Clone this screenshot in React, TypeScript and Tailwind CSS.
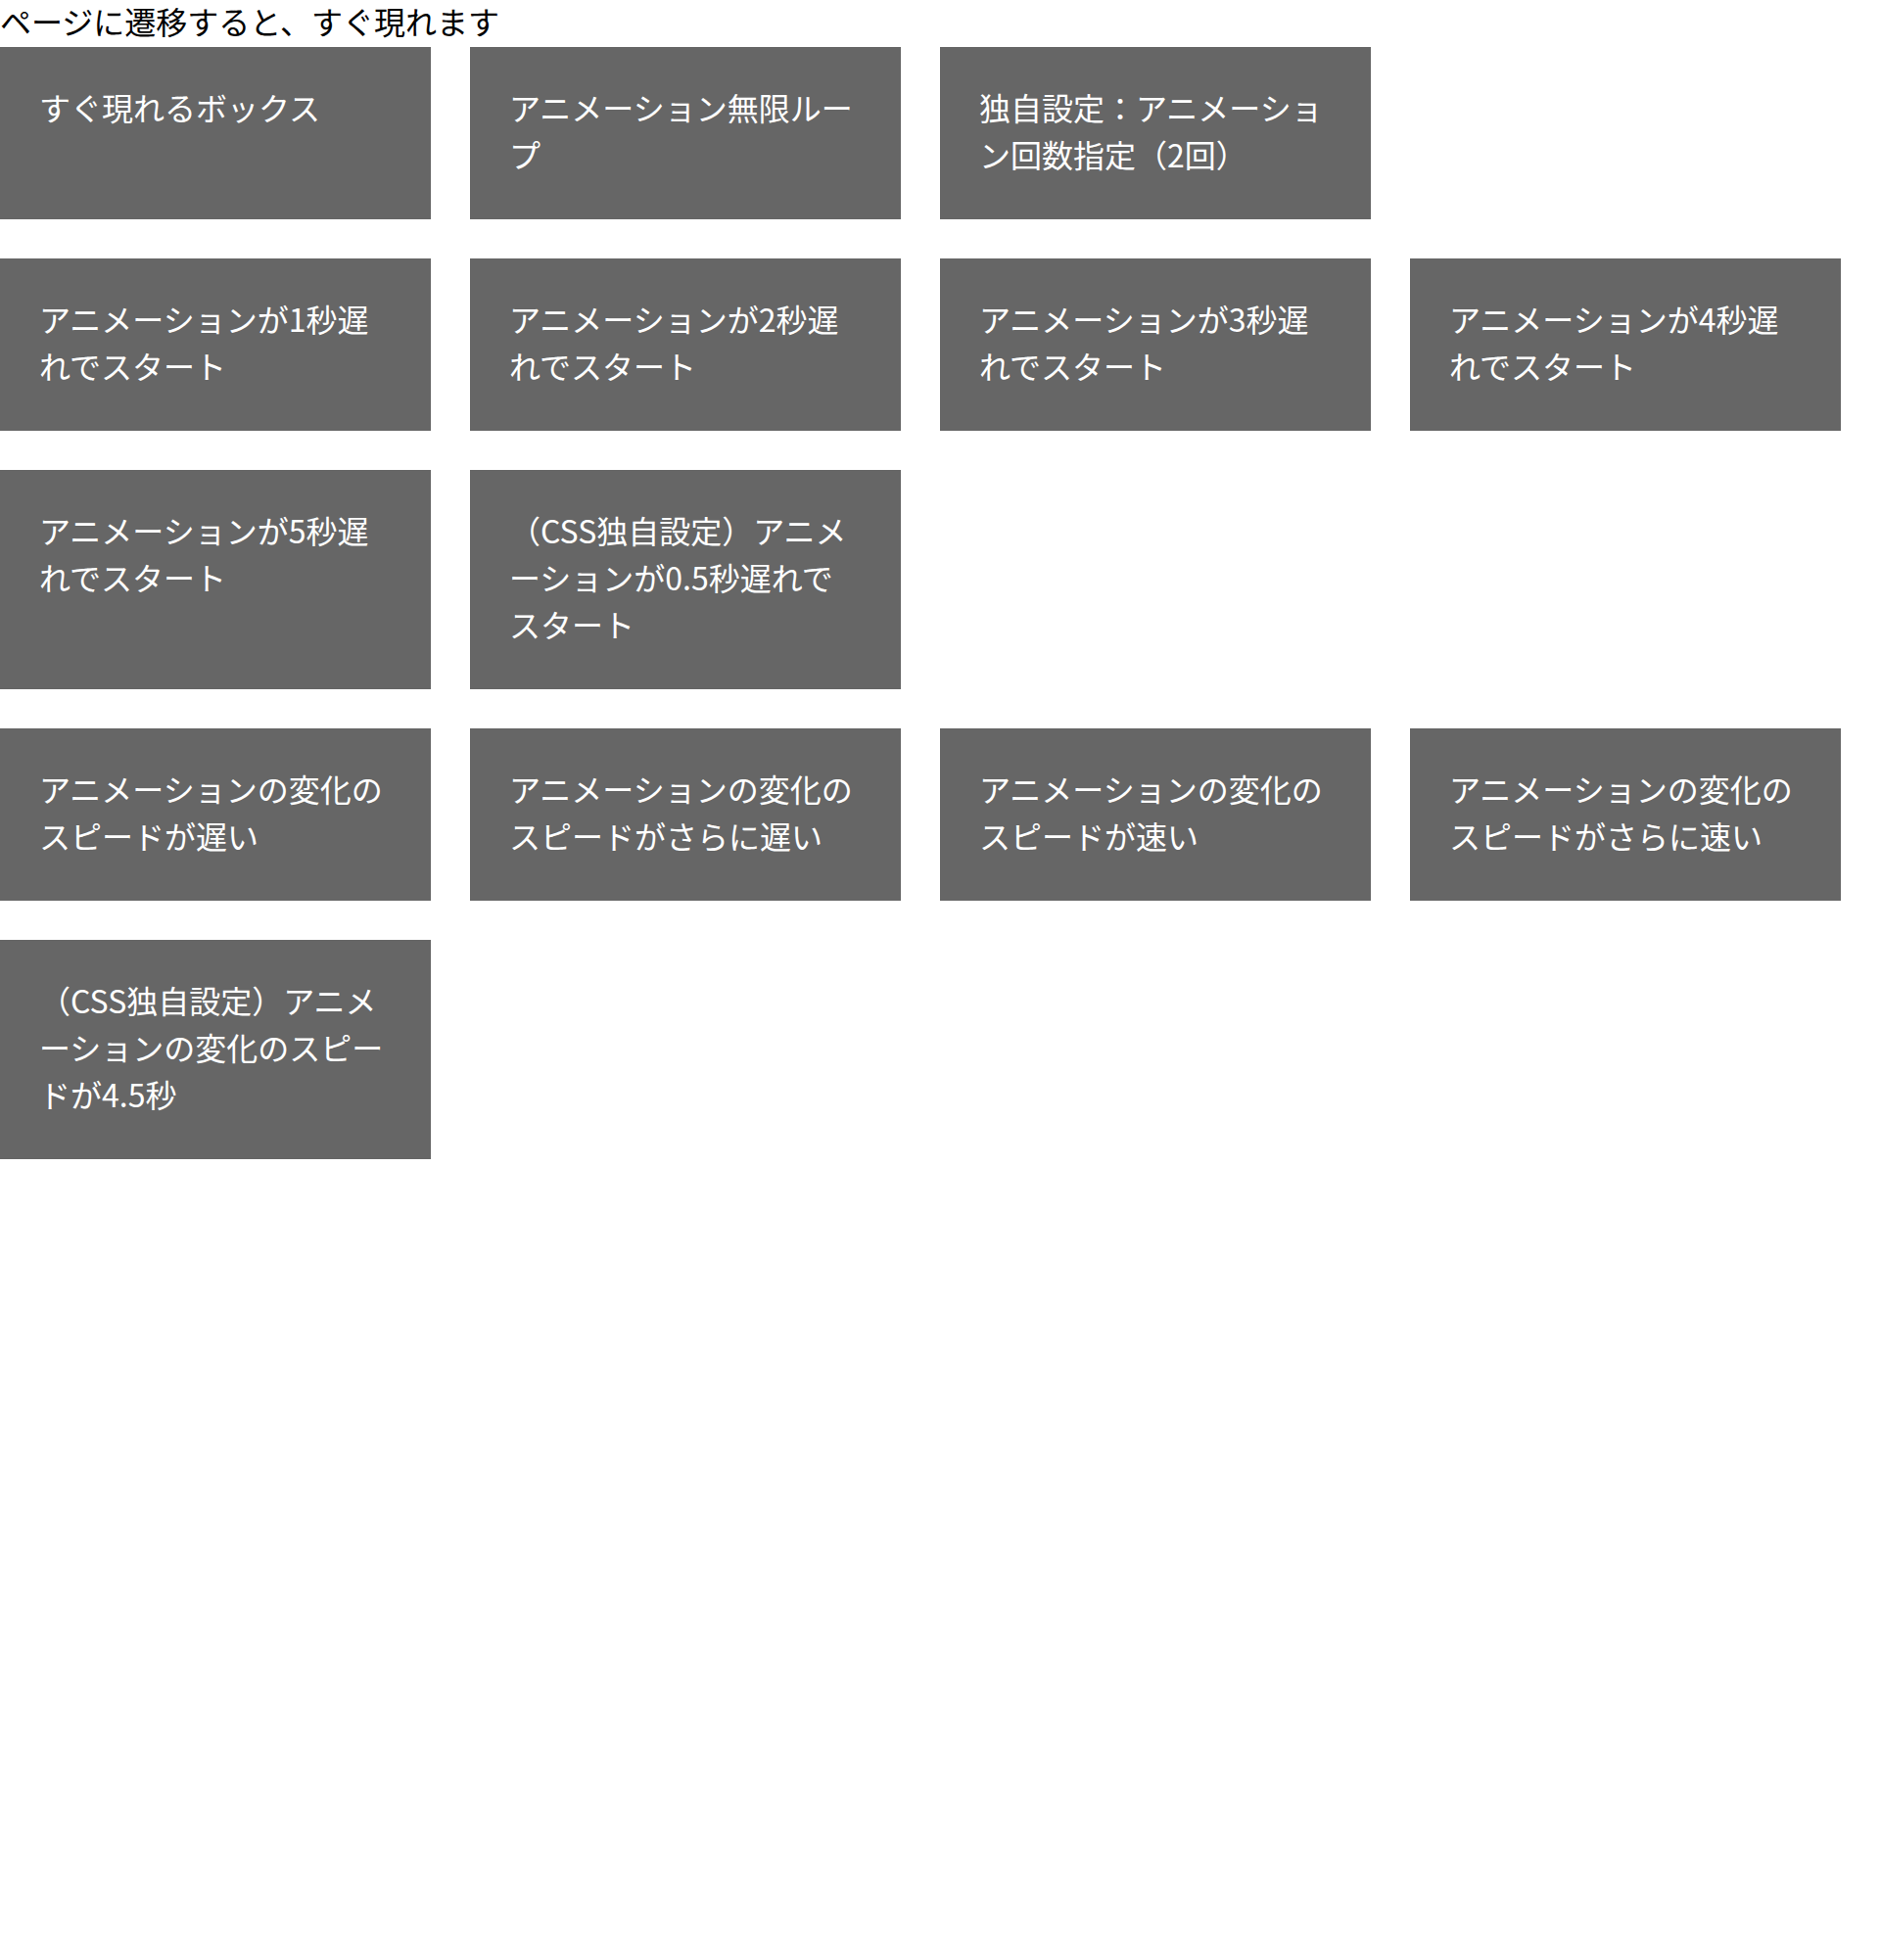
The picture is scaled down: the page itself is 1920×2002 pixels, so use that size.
import React from "react";

const sections: string[][] = [
  ["すぐ現れるボックス", "アニメーション無限ループ", "独自設定：アニメーション回数指定（2回）"],
  [
    "アニメーションが1秒遅れでスタート",
    "アニメーションが2秒遅れでスタート",
    "アニメーションが3秒遅れでスタート",
    "アニメーションが4秒遅れでスタート",
  ],
  ["アニメーションが5秒遅れでスタート", "（CSS独自設定）アニメーションが0.5秒遅れでスタート"],
  [
    "アニメーションの変化のスピードが遅い",
    "アニメーションの変化のスピードがさらに遅い",
    "アニメーションの変化のスピードが速い",
    "アニメーションの変化のスピードがさらに速い",
  ],
  ["（CSS独自設定）アニメーションの変化のスピードが4.5秒"],
];

const Box = ({ label }: { label: string }) => (
  <div className="w-[440px] bg-[#666666] px-10 pt-[37px] pb-[43px] text-[32px] leading-[48px] text-white">
    {label}
  </div>
);

export default function App() {
  return (
    <div
      className="min-h-[2002px] bg-white text-black"
      style={{ fontFamily: '"Noto Sans CJK JP", "Noto Sans", sans-serif' }}
    >
      <p className="pb-[6px] text-[32px] leading-[42px]">ページに遷移すると、すぐ現れます</p>
      {sections.map((row, i) => (
        <div key={i} className="mb-10 flex gap-10">
          {row.map((label, j) => (
            <Box key={j} label={label} />
          ))}
        </div>
      ))}
    </div>
  );
}
